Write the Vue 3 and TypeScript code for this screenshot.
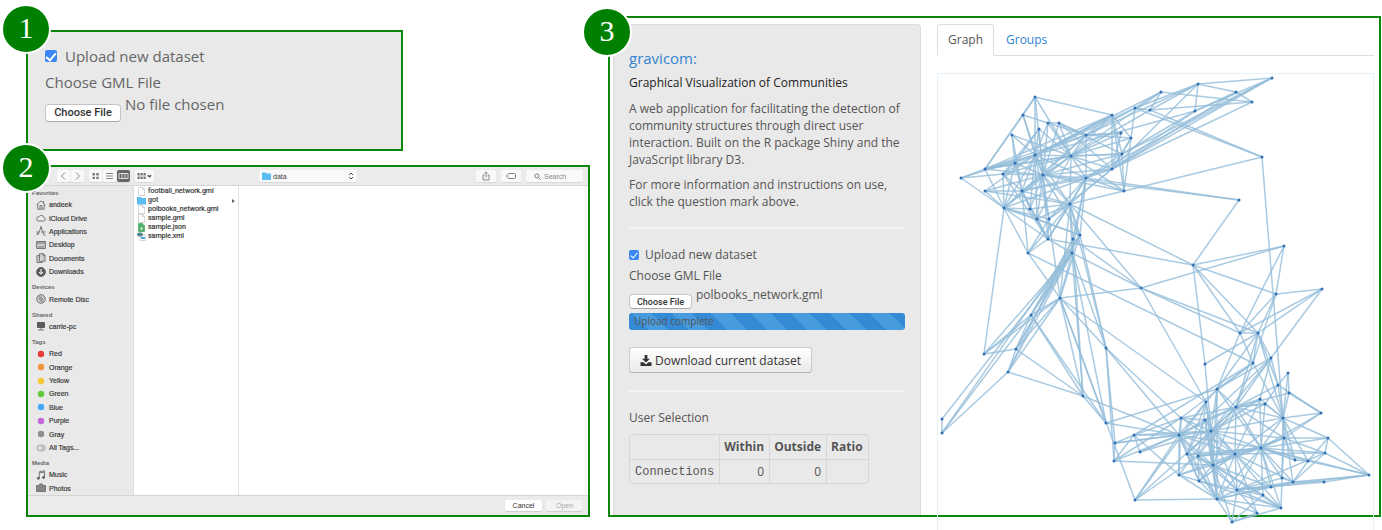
<script setup lang="ts">
import { computed, ref } from 'vue'

type Point = [number, number]

const uploadNew = ref(true)
const uploadLoaded = ref(true)
const emptyName = ref('No file chosen')
const loadedName = ref('polbooks_network.gml')
const emptyPicker = ref<HTMLInputElement | null>(null)
const loadedPicker = ref<HTMLInputElement | null>(null)
const activeTab = ref('Graph')

function fileName(event: Event, fallback: string): string {
  const files = (event.target as HTMLInputElement).files
  return files && files.length ? files[0].name : fallback
}

interface SideItem { label: string; icon: string; color?: string }
const sections: { title: string; items: SideItem[] }[] = [
  {
    title: 'Favorites',
    items: [
      { label: 'andeek', icon: 'home' },
      { label: 'iCloud Drive', icon: 'cloud' },
      { label: 'Applications', icon: 'apps' },
      { label: 'Desktop', icon: 'desktop' },
      { label: 'Documents', icon: 'docs' },
      { label: 'Downloads', icon: 'down' },
    ],
  },
  { title: 'Devices', items: [{ label: 'Remote Disc', icon: 'disc' }] },
  { title: 'Shared', items: [{ label: 'carrie-pc', icon: 'pc' }] },
  {
    title: 'Tags',
    items: [
      { label: 'Red', icon: 'dot', color: '#e63b38' },
      { label: 'Orange', icon: 'dot', color: '#f19537' },
      { label: 'Yellow', icon: 'dot', color: '#f5c836' },
      { label: 'Green', icon: 'dot', color: '#5fca3e' },
      { label: 'Blue', icon: 'dot', color: '#45a6f3' },
      { label: 'Purple', icon: 'dot', color: '#c468dc' },
      { label: 'Gray', icon: 'dot', color: '#8f8f8f' },
      { label: 'All Tags...', icon: 'tags' },
    ],
  },
  {
    title: 'Media',
    items: [
      { label: 'Music', icon: 'music' },
      { label: 'Photos', icon: 'photos' },
    ],
  },
]

const files = [
  { name: 'football_network.gml', kind: 'doc' },
  { name: 'got', kind: 'folder' },
  { name: 'polbooks_network.gml', kind: 'doc' },
  { name: 'sample.gml', kind: 'doc' },
  { name: 'sample.json', kind: 'json' },
  { name: 'sample.xml', kind: 'xml' },
]

const nodes: Point[] = [
  [1035, 97], [1023, 115], [1012, 135], [1039, 129], [1048, 123], [1059, 123], [1086, 135], [1112, 115], [1121, 133], [1131, 138],
  [1122, 154], [1135, 108], [1150, 110], [1035, 155], [1071, 156], [1015, 163], [985, 169], [961, 178], [1003, 174], [1043, 175],
  [1086, 178], [1112, 169], [1124, 191], [985, 191], [1022, 191], [1004, 208], [1030, 209], [1070, 204], [1037, 219], [1049, 219],
  [1048, 239], [1073, 239], [1080, 235], [1028, 253], [1072, 253], [1161, 92], [1198, 84], [1236, 92], [1272, 78], [1252, 102],
  [1195, 111], [1262, 157], [1239, 200], [1284, 246], [1141, 288], [1060, 298], [1031, 315], [984, 354], [1016, 349], [1008, 372],
  [1106, 348], [1083, 396], [942, 419], [942, 433], [1106, 423], [1134, 435], [1115, 443], [1114, 461], [1140, 452], [1135, 500],
  [1193, 265], [1276, 294], [1322, 289], [1240, 333], [1258, 333], [1205, 364], [1253, 363], [1271, 358], [1288, 373], [1278, 385],
  [1289, 393], [1217, 389], [1206, 402], [1236, 407], [1260, 399], [1265, 404], [1283, 418], [1321, 413], [1181, 418], [1205, 420],
  [1179, 435], [1211, 431], [1284, 438], [1328, 438], [1261, 448], [1235, 454], [1325, 453], [1187, 454], [1198, 456], [1213, 465],
  [1295, 460], [1308, 461], [1369, 475], [1179, 475], [1199, 481], [1282, 478], [1293, 482], [1324, 482], [1271, 487], [1237, 490],
  [1263, 495], [1217, 499], [1281, 508], [1257, 513], [1232, 522],
]

const links: Record<number, number[]> = {
  0: [1, 7, 13, 14, 16, 19],
  1: [4, 13, 19, 16],
  2: [13, 14, 15, 24],
  3: [13, 14, 15, 18, 19],
  4: [5, 13, 14, 19, 6],
  5: [6, 14, 10, 21, 19],
  6: [7, 8, 9, 11, 13, 14, 16, 19, 20, 24],
  7: [9, 10, 13, 14, 21, 22, 16],
  8: [6, 14, 21],
  9: [10, 11, 14, 22, 21],
  10: [14, 19, 20, 21, 22, 38],
  11: [12, 35, 36, 13, 41],
  12: [35, 36, 39, 41, 14],
  13: [14, 15, 16, 18, 19, 20, 24, 25, 27, 26, 29, 7, 28],
  14: [16, 18, 19, 20, 21, 22, 24, 25, 27, 28, 10],
  15: [16, 18, 19, 25, 24],
  16: [17, 19, 25, 14],
  17: [13, 18, 25],
  18: [19, 24, 25, 30],
  19: [20, 21, 23, 24, 25, 26, 27, 28, 29, 30, 32, 42, 22],
  20: [21, 22, 24, 25, 27, 29, 30, 31, 32, 34, 42, 38],
  21: [24, 27, 36, 37, 38, 39, 40, 29],
  22: [27, 41],
  23: [13, 24, 25, 27],
  24: [25, 26, 27, 28, 30, 33],
  25: [26, 28, 29, 30, 33, 47, 32],
  26: [27, 30],
  27: [28, 29, 30, 31, 32, 33, 34, 44, 60, 45, 50],
  28: [30, 32],
  29: [30, 33, 45],
  30: [33, 60, 34],
  31: [34, 44, 46, 49, 51],
  32: [46, 48, 53, 50, 45],
  33: [45, 66],
  34: [44, 45, 46, 47, 48, 49, 50, 52, 54, 51],
  35: [39, 14, 13],
  36: [37, 38, 40, 6],
  37: [39, 40],
  38: [40],
  40: [10, 13],
  41: [76],
  42: [60],
  43: [44, 60, 61, 63],
  44: [45, 63, 64, 72],
  45: [46, 47, 48, 49, 50, 51, 54, 59, 72],
  46: [47, 48, 51, 54, 53],
  47: [48],
  48: [49, 51],
  49: [51, 53],
  50: [56, 57, 78, 80],
  51: [54, 80],
  52: [53],
  54: [71, 80],
  55: [56, 57, 78, 80, 81, 66, 93],
  56: [57, 80, 81],
  57: [78, 80, 89],
  58: [80, 81, 55],
  59: [72, 80, 81, 88, 101],
  60: [61, 63, 64, 65],
  61: [62, 63, 64, 66],
  62: [63, 64, 67],
  63: [64, 71, 66],
  64: [65, 66, 67, 73, 71, 69, 76],
  65: [81],
  66: [73, 76, 78, 71],
  67: [73, 71, 74, 69, 81, 79],
  68: [69, 70, 76],
  69: [73, 75, 77, 76],
  70: [73, 76, 77],
  71: [72, 73, 81, 84, 89, 101],
  72: [81, 87, 80, 88, 89],
  73: [74, 75, 79, 80, 81, 82, 84, 85, 87, 89, 76, 78, 88],
  74: [81, 84, 76, 85],
  75: [84, 81, 76, 73],
  76: [77, 81, 82, 83, 84, 85, 90, 95, 96, 91],
  77: [82, 84],
  78: [79, 80, 81, 85, 93],
  79: [80, 81, 85, 87, 89, 101],
  80: [81, 87, 88, 89, 93, 101, 85, 94],
  81: [84, 85, 87, 88, 89, 93, 99, 101, 82],
  82: [83, 84, 85, 90, 95, 89],
  83: [84, 86, 92, 91],
  84: [85, 86, 87, 88, 89, 90, 91, 95, 96, 98, 99, 100, 102, 92, 101, 80],
  85: [86, 88, 89, 93, 94, 96, 98, 99, 101, 102, 103, 87],
  86: [92, 96, 99, 82],
  87: [89, 94, 101],
  88: [89, 94, 99, 101, 84],
  89: [93, 94, 99, 100, 101, 102, 104, 98],
  90: [91, 84],
  91: [92, 96],
  92: [96, 99, 97],
  93: [94, 101],
  94: [99, 101, 102, 85],
  95: [96, 99, 102],
  96: [97, 99, 98, 101],
  97: [99],
  98: [99, 101],
  99: [100, 101, 102, 103, 104],
  100: [102, 104],
  101: [102, 103, 104],
  102: [104],
  103: [104],
}

const edges = computed(() =>
  Object.entries(links).flatMap(([from, list]) =>
    list.map((to) => ({ a: nodes[Number(from)], b: nodes[to] })),
  ),
)
</script>

<template>
  <main class="figure">
    <div class="left">
      <section class="step upload">
        <span class="badge">1</span>
        <label class="check"><input v-model="uploadNew" type="checkbox" />Upload new dataset</label>
        <label class="caption" for="gml-empty">Choose GML File</label>
        <div class="picker">
          <button type="button" @click="emptyPicker?.click()">Choose File</button>
          <span>{{ emptyName }}</span>
          <input id="gml-empty" ref="emptyPicker" type="file" hidden @change="emptyName = fileName($event, emptyName)" />
        </div>
      </section>

      <section class="step finder">
        <span class="badge">2</span>
        <header class="toolbar">
          <div class="tools start">
            <div class="group nav">
              <button type="button" aria-label="Back"><svg viewBox="0 0 10 10"><path d="M6.500 1.500 3 5l3.500 3.500" /></svg></button>
              <button type="button" aria-label="Forward"><svg viewBox="0 0 10 10"><path d="M3.500 1.500 7 5 3.500 8.500" /></svg></button>
            </div>
            <div class="group views">
              <button type="button" aria-label="Icons"><svg viewBox="0 0 10 10"><path class="solid" d="M2 2h2.400v2.400H2zM5.800 2h2.400v2.400H5.800zM2 5.700h2.400v2.400H2zM5.800 5.700h2.400v2.400H5.800z" /></svg></button>
              <button type="button" aria-label="List"><svg viewBox="0 0 10 10"><path d="M1.500 2.500h7M1.500 5h7M1.500 7.500h7" /></svg></button>
              <button type="button" class="on" aria-label="Columns"><svg viewBox="0 0 10 10"><path d="M.5 2.500h9v5h-9zM3.500 2.500v5M6.500 2.500v5" /></svg></button>
            </div>
            <div class="group arrange">
              <button type="button" aria-label="Arrange"><svg viewBox="0 0 16 10"><path class="solid" d="M1 2h2.200v2.500H1zM4 2h2.200v2.500H4zM7 2h2.200v2.500H7zM1 5.500h2.200V8H1zM4 5.500h2.200V8H4zM7 5.500h2.200V8H7z" /><path class="bold" d="m11.300 4.300 1.700 1.500 1.700-1.500" /></svg></button>
            </div>
          </div>
          <label class="place">
            <svg class="folder" viewBox="0 0 9 8"><path d="M0 .5h3.500l1 1H9V8H0z" /></svg>
            <select aria-label="Folder"><option>data</option></select>
            <svg class="arrows" viewBox="0 0 6 8"><path d="M1 3 3 1l2 2M1 5l2 2 2-2" /></svg>
          </label>
          <div class="tools end">
            <div class="group"><button class="wide" type="button" aria-label="Share"><svg viewBox="0 0 10 10"><path d="M3.500 4H2v5h6V4H6.500M5 6.500V1M3.500 2.300 5 .8l1.500 1.500" /></svg></button></div>
            <div class="group"><button class="wide" type="button" aria-label="Tags"><svg viewBox="0 0 10 10"><path d="M2.500 2.500h6q1 0 1 1v3q0 1-1 1h-6L.5 5z" /></svg></button></div>
            <label class="search">
              <svg viewBox="0 0 10 10"><circle cx="4.200" cy="4.200" r="3" /><path d="m6.500 6.500 3 3" /></svg>
              <input type="search" placeholder="Search" aria-label="Search" />
            </label>
          </div>
        </header>

        <div class="browser">
          <nav class="places" aria-label="Places">
            <section v-for="s in sections" :key="s.title" :style="{ flexGrow: s.items.length }">
              <h3>{{ s.title }}</h3>
              <ul>
                <li v-for="i in s.items" :key="i.label">
                  <svg viewBox="0 0 10 10" aria-hidden="true">
                    <path v-if="i.icon === 'home'" d="M.5 5 5 .8 9.500 5M1.800 4.200v5h6.400v-5M4 9V5.500h2V9M7.500 3V1" />
                    <path v-else-if="i.icon === 'cloud'" d="M2.500 8h5.300a1.800 1.800 0 0 0 .2-3.500A2.700 2.700 0 0 0 3 3.800 2.100 2.100 0 0 0 2.500 8z" />
                    <path v-else-if="i.icon === 'apps'" d="M2 9 5 1l3 8M.3 6h3M5 6h4.700M4 1h2M.5 8.800 2 6.500M8 9.200h1.500" />
                    <path v-else-if="i.icon === 'desktop'" class="tint" d="M.6 1.500h8.800v7H.6zM.6 3h8.800M2 7h6" />
                    <path v-else-if="i.icon === 'docs'" class="tint" d="M3.500.7h4L9 2.200v6H3.500zM3 2.500H1v7h5.500v-1M7 .7v2h2" />
                    <g v-else-if="i.icon === 'down'"><circle class="dark" cx="5" cy="5" r="4.400" /><path class="light" d="M5 2v5M3 5l2 2.200L7 5" /></g>
                    <g v-else-if="i.icon === 'disc'"><circle class="tint" cx="5" cy="5" r="4.300" /><circle cx="5" cy="5" r="1.400" /><path d="M2.500 3.500a3 3 0 0 1 2-1.300M7.500 6.500a3 3 0 0 1-2 1.300" /></g>
                    <g v-else-if="i.icon === 'pc'"><path class="dark" d="M1.500 1.500h7v5h-7z" /><path d="M2 9h6M5 7v2" /></g>
                    <ellipse v-else-if="i.icon === 'dot'" class="dot" cx="5" cy="5" rx="3.200" ry="3.300" :fill="i.color" />
                    <g v-else-if="i.icon === 'tags'"><circle class="pale" cx="6.200" cy="5" r="3" /><circle class="pale" cx="4" cy="5" r="3" /></g>
                    <g v-else-if="i.icon === 'music'"><path d="M3.300 8.200V1.800L8.500.8v6.500M3.300 3l5.200-1" /><circle class="dark" cx="2.300" cy="8.300" r="1" /><circle class="dark" cx="7.500" cy="7.400" r="1" /></g>
                    <path v-else class="mid" d="M.5 2.500H3L3.700 1h2.600L7 2.500h2.500v6h-9z" />
                  </svg>
                  {{ i.label }}
                </li>
              </ul>
            </section>
          </nav>
          <ul class="files">
            <li v-for="f in files" :key="f.name">
              <svg v-if="f.kind === 'folder'" class="folder" viewBox="0 0 9 8"><path d="M0 .5h3.500l1 1H9V8H0z" /></svg>
              <svg v-else class="page" :class="f.kind" viewBox="0 0 9 9">
                <path v-if="f.kind !== 'xml'" d="M1.500.5h4l2 2v6h-6zM5.500.5v2h2" />
                <path v-if="f.kind === 'json'" class="mark" d="M3 4h3v3H3z" />
                <g v-if="f.kind === 'xml'"><path d="M3 3h5.500v5.500H3z" /><ellipse class="globe" cx="3" cy="2.500" rx="3" ry="2" /><path class="bar" d="M4 5h4v2H4z" /></g>
              </svg>
              <span>{{ f.name }}</span>
              <i v-if="f.kind === 'folder'"></i>
            </li>
          </ul>
        </div>

        <footer class="actions">
          <button type="button">Cancel</button>
          <button type="button" disabled>Open</button>
        </footer>
      </section>
    </div>

    <section class="step app">
      <span class="badge">3</span>
      <aside class="well">
        <h1>gravicom:</h1>
        <h2>Graphical Visualization of Communities</h2>
        <p>A web application for facilitating the detection of community structures through direct user interaction. Built on the R package Shiny and the JavaScript library D3.</p>
        <p>For more information and instructions on use, click the question mark above.</p>
        <hr />
        <label class="check"><input v-model="uploadLoaded" type="checkbox" />Upload new dataset</label>
        <label class="caption" for="gml-loaded">Choose GML File</label>
        <div class="picker">
          <button type="button" @click="loadedPicker?.click()">Choose File</button>
          <span>{{ loadedName }}</span>
          <input id="gml-loaded" ref="loadedPicker" type="file" hidden @change="loadedName = fileName($event, loadedName)" />
        </div>
        <div class="progress" role="progressbar" aria-valuenow="100" aria-valuemin="0" aria-valuemax="100">Upload complete</div>
        <button type="button" class="download">
          <svg viewBox="0 0 12 12" aria-hidden="true"><path d="M4.500 0h3v4h2.800L6 8.300 1.700 4h2.800zM0 7.800h3.200L6 10.400l2.800-2.600H12V12H0z" /></svg>
          Download current dataset
        </button>
        <hr />
        <h4>User Selection</h4>
        <table>
          <thead>
            <tr><th></th><th scope="col">Within</th><th scope="col">Outside</th><th scope="col">Ratio</th></tr>
          </thead>
          <tbody>
            <tr><td class="name">Connections</td><td>0</td><td>0</td><td></td></tr>
          </tbody>
        </table>
      </aside>
      <div class="content">
        <nav class="tabs">
          <a v-for="t in ['Graph', 'Groups']" :key="t" href="#" :class="{ active: t === activeTab }" @click.prevent="activeTab = t">{{ t }}</a>
        </nav>
        <svg class="graph" viewBox="937 73 437 467" role="img" aria-label="Network graph">
          <line v-for="(e, n) in edges" :key="'e' + n" :x1="e.a[0]" :y1="e.a[1]" :x2="e.b[0]" :y2="e.b[1]" />
          <circle v-for="(p, n) in nodes" :key="'n' + n" :cx="p[0]" :cy="p[1]" r="1.500" />
        </svg>
      </div>
    </section>
  </main>
</template>

<style>
body {
  margin: 0;
  background: #fff;
}
</style>

<style scoped>
* {
  box-sizing: border-box;
}
.figure {
  display: grid;
  grid-template-rows: minmax(0, 1fr);
  grid-template-columns: minmax(0, 564fr) minmax(0, 773fr);
  gap: 18px;
  height: 100vh;
  min-height: 530px;
  padding: 16px 1px 13px 26px;
  overflow: hidden;
  font-family: 'Open Sans', sans-serif;
  color: #555;
}
h1, h2, h3, h4, p, ul {
  margin: 0;
  padding: 0;
  font-weight: 400;
  list-style: none;
}
button, input, select {
  font-family: inherit;
}
.left {
  display: flex;
  flex-direction: column;
  gap: 14px;
  min-height: 0;
  padding-top: 14px;
}
.step {
  position: relative;
  border: 2px solid #0b860b;
}
.badge {
  position: absolute;
  z-index: 2;
  top: -28px;
  left: -27px;
  width: 50px;
  height: 50px;
  border: 2px solid #fff;
  border-radius: 50%;
  background: #008000;
  color: #fff;
  font: 30px/44px 'Liberation Serif', serif;
  text-align: center;
}
.upload {
  width: 377px;
  max-width: 100%;
  padding: 13px 17px 27px;
  background: #e9e9e9;
  color: #666;
  font-size: 15px;
}
.check {
  display: flex;
  align-items: center;
}
.check input {
  appearance: none;
  width: 10px;
  height: 10px;
  margin: 0 6px 0 0;
  border-radius: 2px;
  background: #3b87f5;
}
.check input:checked::after {
  content: '';
  display: block;
  width: 3px;
  height: 6px;
  margin: 1px auto;
  border: solid #fff;
  border-width: 0 1px 1px 0;
  transform: rotate(40deg);
}
.upload .check {
  line-height: 22px;
}
.upload .check input {
  width: 12px;
  height: 12px;
  margin-right: 8px;
}
.upload .check input:checked::after {
  width: 4px;
  height: 8px;
  border-width: 0 2px 2px 0;
}
.caption {
  display: block;
}
.upload .caption {
  margin-top: 4px;
  line-height: 22px;
}
.picker {
  display: flex;
  align-items: flex-start;
  gap: 4px;
}
.picker button {
  border: 1px solid #c4c4c4;
  border-bottom-color: #aaa;
  border-radius: 4px;
  background: #fff;
  color: #333;
  font-family: Roboto, sans-serif;
  font-weight: 500;
  white-space: nowrap;
}
.upload .picker button {
  width: 76px;
  height: 18px;
  margin-top: 11px;
  padding: 0;
  font-size: 11px;
  line-height: 16px;
}
.upload .picker span {
  line-height: 22px;
}

.finder {
  display: flex;
  flex: 1;
  flex-direction: column;
  min-height: 0;
  background: #ebebeb;
  color: #3c3c3c;
  font-family: 'Liberation Sans', sans-serif;
  font-size: 7px;
}
.finder .badge {
  top: -24px;
}
.toolbar {
  display: grid;
  flex: none;
  grid-template-columns: 1fr 98px 1fr;
  align-items: center;
  height: 19px;
  padding: 0 5px;
  border-bottom: 1px solid #d6d6d6;
}
.toolbar button, .place, .search {
  height: 12px;
  border: 0;
  border-radius: 2px;
  background: #f9f9f9;
}
.tools {
  display: flex;
  gap: 5px;
}
.tools.start {
  padding-left: 24px;
}
.tools.end {
  justify-content: flex-end;
}
.group {
  display: flex;
  gap: 1px;
  border-radius: 2px;
  box-shadow: 0 1px 1px #d8d8d8;
}
.toolbar button {
  width: 13px;
  padding: 1px;
}
.toolbar .arrange button {
  width: 19px;
}
.toolbar .wide {
  width: 20px;
}
.toolbar .on {
  background: #666;
}
.toolbar .on svg {
  stroke: #ddd;
}
svg {
  fill: none;
  stroke: #888;
}
.toolbar button svg {
  display: block;
  width: 100%;
  height: 10px;
}
svg .solid {
  fill: #777;
  stroke: none;
}
svg .bold {
  stroke: #555;
  stroke-width: 1.5;
}
.place {
  display: flex;
  align-items: center;
  padding: 0 3px;
  box-shadow: 0 1px 1px #d8d8d8;
}
svg.folder {
  width: 9px;
  height: 8px;
  fill: #5bbcf2;
  stroke: none;
}
.place select {
  flex: 1;
  min-width: 0;
  padding: 0 2px;
  border: 0;
  appearance: none;
  background: none;
  color: #3c3c3c;
  font-size: 7px;
}
.arrows {
  width: 6px;
  height: 8px;
  stroke: #555;
}
.search {
  display: flex;
  align-items: center;
  gap: 3px;
  width: 57px;
  padding: 0 8px;
  box-shadow: 0 1px 1px #d8d8d8;
}
.search svg {
  flex: none;
  width: 7px;
  height: 7px;
  stroke: #555;
}
.search input {
  width: 100%;
  min-width: 0;
  padding: 0;
  border: 0;
  outline: 0;
  background: none;
  font-size: 7px;
}
.search input::placeholder {
  color: #888;
}
.browser {
  display: flex;
  flex: 1;
  min-height: 0;
  background: #fff;
}
.places {
  display: flex;
  flex-direction: column;
  width: 106px;
  border-right: 1px solid #ddd;
  background: #e9e9e9;
}
.places section {
  display: flex;
  flex-direction: column;
  flex-basis: auto;
}
.places h3 {
  padding: 4px 0 0 4px;
  color: #666;
  font-size: 6px;
  font-weight: 700;
  line-height: 10px;
}
.places section:first-child h3 {
  padding-top: 2px;
}
.places ul {
  display: flex;
  flex: 1 0 auto;
  flex-direction: column;
}
.places li {
  display: flex;
  flex: 1 0 13px;
  align-items: center;
  gap: 3px;
  padding-left: 8px;
  -webkit-text-stroke: 0.2px #3c3c3c;
}
.places svg {
  width: 10px;
  height: 10px;
  stroke: #777;
}
.places svg .tint {
  fill: #ccc;
}
.places svg .dark {
  fill: #5c5c5c;
  stroke: #5c5c5c;
}
.places svg .mid {
  fill: #858585;
}
.places svg .light {
  stroke: #fff;
}
.places svg .pale {
  fill: #ddd;
  stroke: #aaa;
}
.places svg .dot {
  stroke: none;
}
.files {
  width: 105px;
  padding: 1px 3px 0;
  border-right: 1px solid #e2e2e2;
  font-family: Roboto, sans-serif;
}
.files li {
  display: flex;
  align-items: center;
  gap: 2px;
  height: 9px;
  line-height: 9px;
  white-space: nowrap;
  -webkit-text-stroke: 0.2px #3c3c3c;
}
.files svg {
  flex: none;
  width: 9px;
  height: 9px;
}
.page {
  fill: #fff;
  stroke: #bbb;
  stroke-width: 0.6;
}
.page.json {
  fill: #4cb56a;
  stroke: #3d9f58;
}
.page .mark {
  fill: #d8f0de;
}
.page .globe {
  fill: #3e8796;
}
.page .bar {
  fill: #4da3e8;
  stroke: none;
}
.files i {
  margin-left: auto;
  border: 2px solid transparent;
  border-left: 3px solid #666;
  border-right: 0;
}
.actions {
  display: flex;
  flex: none;
  align-items: center;
  justify-content: flex-end;
  gap: 4px;
  height: 20px;
  padding: 0 5px;
  border-top: 1px solid #d4d4d4;
}
.actions button {
  width: 37px;
  height: 11px;
  padding: 0;
  border: 0;
  border-radius: 2px;
  background: #fff;
  box-shadow: 0 1px 1px #ccc;
  color: #333;
  font-size: 7px;
}
.actions button:disabled {
  background: #f3f3f3;
  color: #aaa;
}

.app {
  display: grid;
  grid-template-rows: minmax(0, 1fr);
  grid-template-columns: minmax(0, 308fr) minmax(0, 437fr);
  gap: 16px;
  padding: 6px 5px 0 3px;
}
.app .badge {
  top: -11px;
  left: -28px;
}
.well {
  min-width: 0;
  padding: 24px 15px 0;
  border: 1px solid #dcdcdc;
  border-bottom: 0;
  border-radius: 4px 4px 0 0;
  background: #e9e9e9;
  font-size: 12px;
  line-height: 17px;
}
h1 {
  color: #3584cf;
  font-size: 15px;
  line-height: 18px;
}
h2 {
  margin: 7px 0 9px;
  color: #222;
  font-size: 12px;
  line-height: 17px;
}
p {
  margin-bottom: 8px;
}
hr {
  height: 2px;
  margin: 17px 0;
  border: 0;
  background: #f4f4f4;
}
.well .caption {
  margin: 4px 0 2px;
}
.well .picker button {
  width: 63px;
  height: 15px;
  margin-top: 8px;
  padding: 0;
  font-size: 9px;
  line-height: 12px;
}
.progress {
  margin: 4px 0 17px;
  padding-left: 5px;
  border-radius: 3px;
  background: repeating-linear-gradient(45deg, #358ad6 0 14px, #489bdc 14px 28px);
  font-size: 10px;
}
.download {
  display: flex;
  align-items: center;
  gap: 3px;
  height: 26px;
  padding: 0 10px;
  border: 1px solid #ccc;
  border-bottom-color: #b3b3b3;
  border-radius: 3px;
  background: linear-gradient(#fff, #e9e9e9);
  color: #333;
  font-size: 12px;
  white-space: nowrap;
}
.download svg {
  width: 12px;
  height: 11px;
  fill: #333;
  stroke: none;
}
h4 {
  font-size: 12px;
}
table {
  margin-top: 8px;
  border: 1px solid #d6d6d6;
  border-radius: 4px;
  border-spacing: 0;
}
th, td {
  height: 24px;
  padding: 0 5px;
  border-left: 1px solid #d6d6d6;
  font-size: 12px;
  line-height: 16px;
  text-align: right;
}
th {
  padding: 0 5px 0 4px;
}
th:first-child, td:first-child {
  border-left: 0;
}
td {
  border-top: 1px solid #d6d6d6;
}
td.name {
  font-family: 'Liberation Mono', monospace;
}
.content {
  min-width: 0;
}
.tabs {
  display: flex;
  height: 32px;
  border-bottom: 1px solid #ddd;
}
.tabs a {
  height: 32px;
  padding: 0 12px;
  color: #2f86cf;
  font-size: 12px;
  line-height: 32px;
  text-decoration: none;
}
.tabs a.active {
  padding: 0 10px;
  border: 1px solid #ddd;
  border-bottom-color: #fff;
  border-radius: 4px 4px 0 0;
  color: #555;
  line-height: 30px;
}
.graph {
  display: block;
  width: 100%;
  margin-top: 17px;
  outline: 1px solid #e6f0f8;
  outline-offset: -1px;
}
.graph line {
  stroke: #94bdd9;
  stroke-opacity: 0.8;
  stroke-width: 1.5;
}
.graph circle {
  fill: #2f6fb3;
  stroke: none;
}
</style>
